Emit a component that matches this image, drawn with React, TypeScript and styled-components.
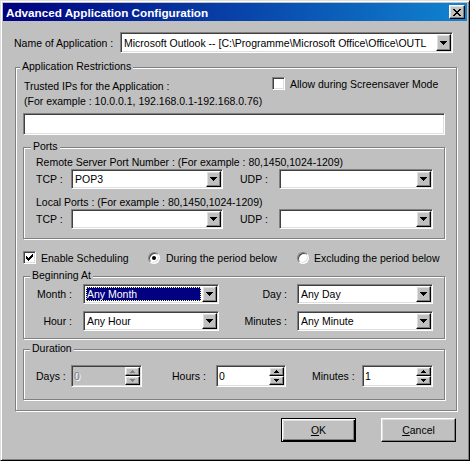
import React from "react";
import styled, { createGlobalStyle, css } from "styled-components";

const GlobalStyle = createGlobalStyle`
  html, body { margin: 0; padding: 0; background: #c0c0c0; }
  body {
    font-family: "Liberation Sans", Arial, sans-serif;
    font-size: 10.5px;
    color: #000;
  }
  * { box-sizing: border-box; }
`;

const raised = css`
  border: 1px solid;
  border-color: #fff #000 #000 #fff;
  box-shadow: inset -1px -1px 0 #808080, inset 1px 1px 0 #dfdfdf;
  background: #c0c0c0;
`;

const sunken = css`
  border: 1px solid;
  border-color: #808080 #fff #fff #808080;
  box-shadow: inset 1px 1px 0 #404040, inset -1px -1px 0 #dfdfdf;
  padding: 1px;
`;

const etched = css`
  border: 1px solid #808080;
  box-shadow: inset 1px 1px 0 #fff, 1px 1px 0 #fff;
`;

const Window = styled.div`
  width: 470px;
  height: 461px;
  background: #c0c0c0;
  border: 1px solid;
  border-color: #dfdfdf #000 #000 #dfdfdf;
  box-shadow: inset 1px 1px 0 #fff, inset -1px -1px 0 #808080;
  padding: 2px;
  display: flex;
  flex-direction: column;
`;

const TitleBar = styled.div`
  height: 18px;
  flex: none;
  display: flex;
  align-items: center;
  justify-content: space-between;
  background: linear-gradient(to right, #000080, #1084d0);
  padding: 0 2px 0 3px;
`;

const TitleText = styled.span`
  color: #fff;
  font-weight: bold;
  font-size: 11.7px;
  white-space: nowrap;
`;

const CloseButton = styled.div`
  ${raised};
  width: 16px;
  height: 14px;
  display: flex;
  align-items: center;
  justify-content: center;
`;

const Body = styled.div`
  padding: 0 10px 0 11px;
  display: flex;
  flex-direction: column;
`;

const NameRow = styled.div`
  display: flex;
  align-items: center;
  margin-top: 11px;
`;

const NameLabel = styled.span`
  width: 106px;
  flex: none;
  white-space: nowrap;
`;

const GroupBox = styled.div<{ $mt: number; $pad: string; $w?: number }>`
  position: relative;
  ${etched};
  margin-top: ${(p) => p.$mt}px;
  padding: ${(p) => p.$pad};
  ${(p) => (p.$w ? `width: ${p.$w}px; margin-left: 1px;` : "")}
`;

const GroupLegend = styled.span<{ $left: number }>`
  position: absolute;
  top: -8px;
  left: ${(p) => p.$left}px;
  padding: 0 2px;
  line-height: 13px;
  background: #c0c0c0;
  white-space: nowrap;
`;

const TopRow = styled.div`
  display: flex;
  align-items: flex-start;
  height: 33px;
`;

const TrustedText = styled.div`
  width: 249px;
  margin-top: 3px;
  padding-left: 1px;
  line-height: 15px;
  white-space: nowrap;
`;

const CheckItem = styled.div<{ $mt?: number; $w?: number }>`
  display: flex;
  align-items: center;
  margin-top: ${(p) => p.$mt ?? 0}px;
  ${(p) => (p.$w ? `width: ${p.$w}px;` : "")}
  white-space: nowrap;
  flex: none;
`;

const CheckBoxSquare = styled.div`
  ${sunken};
  width: 13px;
  height: 13px;
  padding: 0;
  background: #fff;
  display: flex;
  align-items: center;
  justify-content: center;
  flex: none;
`;

const RadioCircle = styled.div`
  width: 12px;
  height: 12px;
  border-radius: 50%;
  border: 1px solid;
  border-color: #808080 #fff #fff #808080;
  box-shadow: inset 1px 1px 0 #404040, inset -1px -1px 0 #dfdfdf;
  background: #fff;
  display: flex;
  align-items: center;
  justify-content: center;
  flex: none;
`;

const RadioDot = styled.div`
  width: 4px;
  height: 4px;
  border-radius: 50%;
  background: #000;
`;

const OptionText = styled.span<{ $gap: number }>`
  margin-left: ${(p) => p.$gap}px;
`;

const TextInput = styled.div`
  ${sunken};
  background: #fff;
  width: 422px;
  height: 22px;
  margin-top: 4px;
`;

const InfoLine = styled.div<{ $mt?: number }>`
  line-height: 13px;
  margin-top: ${(p) => p.$mt ?? 0}px;
  white-space: nowrap;
`;

const FieldRow = styled.div<{ $mt?: number }>`
  display: flex;
  align-items: center;
  margin-top: ${(p) => p.$mt ?? 0}px;
`;

const FieldLabel = styled.span<{ $w: number; $ml?: number; $right?: boolean }>`
  width: ${(p) => p.$w}px;
  margin-left: ${(p) => p.$ml ?? 0}px;
  flex: none;
  display: flex;
  justify-content: ${(p) => (p.$right ? "flex-end" : "flex-start")};
  white-space: nowrap;
`;

const ComboFrame = styled.div<{ $w: number; $h: number; $ml?: number }>`
  ${sunken};
  background: #fff;
  width: ${(p) => p.$w}px;
  height: ${(p) => p.$h}px;
  margin-left: ${(p) => p.$ml ?? 0}px;
  display: flex;
  align-items: stretch;
  flex: none;
`;

const ComboValue = styled.div<{ $selected?: boolean }>`
  flex: 1;
  min-width: 0;
  display: flex;
  align-items: center;
  padding-left: 2px;
  white-space: nowrap;
  overflow: hidden;
  ${(p) =>
    p.$selected &&
    css`
      background: #000080;
      color: #fff;
      margin: 1px;
      padding-left: 1px;
      outline: 1px dotted #ffff80;
      outline-offset: -1px;
    `}
`;

const DropButton = styled.div`
  ${raised};
  width: 15px;
  flex: none;
  display: flex;
  align-items: center;
  justify-content: center;
`;

const SchedRow = styled.div`
  display: flex;
  align-items: center;
  height: 13px;
  margin-top: 12px;
`;

const SpinFrame = styled.div<{ $w: number; $disabled?: boolean }>`
  ${sunken};
  width: ${(p) => p.$w}px;
  height: 22px;
  background: ${(p) => (p.$disabled ? "#c0c0c0" : "#fff")};
  display: flex;
  flex: none;
`;

const SpinValue = styled.div<{ $disabled?: boolean }>`
  flex: 1;
  display: flex;
  align-items: center;
  padding-left: 1px;
  color: ${(p) => (p.$disabled ? "#808080" : "#000")};
  ${(p) => (p.$disabled ? "text-shadow: 1px 1px 0 #fff;" : "")}
`;

const SpinButtons = styled.div`
  width: 15px;
  flex: none;
  display: flex;
  flex-direction: column;
`;

const SpinButton = styled.div`
  ${raised};
  flex: 1;
  display: flex;
  align-items: center;
  justify-content: center;
`;

const ButtonRow = styled.div`
  display: flex;
  justify-content: flex-end;
  gap: 25px;
  margin-top: 7px;
  margin-right: 1px;
`;

const PushButton = styled.div<{ $default?: boolean }>`
  width: 75px;
  height: 24px;
  display: flex;
  align-items: center;
  justify-content: center;
  background: #c0c0c0;
  border: 1px solid;
  ${(p) =>
    p.$default
      ? css`
          border-color: #000;
          box-shadow: inset 1px 1px 0 #fff, inset -1px -1px 0 #000,
            inset -2px -2px 0 #808080, inset 2px 2px 0 #dfdfdf;
        `
      : css`
          border-color: #fff #000 #000 #fff;
          box-shadow: inset -1px -1px 0 #808080, inset 1px 1px 0 #dfdfdf;
        `}
`;

const ArrowDown = ({ color = "#000" }: { color?: string }) => (
  <svg width="7" height="4" viewBox="0 0 7 4" shapeRendering="crispEdges">
    <path d="M0 0h7v1H0z M1 1h5v1H1z M2 2h3v1H2z M3 3h1v1H3z" fill={color} />
  </svg>
);

const SmallArrow = ({ up, color = "#000" }: { up?: boolean; color?: string }) => (
  <svg width="5" height="3" viewBox="0 0 5 3" shapeRendering="crispEdges">
    {up ? (
      <path d="M2 0h1v1H2z M1 1h3v1H1z M0 2h5v1H0z" fill={color} />
    ) : (
      <path d="M0 0h5v1H0z M1 1h3v1H1z M2 2h1v1H2z" fill={color} />
    )}
  </svg>
);

const CheckMark = () => (
  <svg width="7" height="7" viewBox="0 0 7 7" shapeRendering="crispEdges">
    <path
      d="M6 0h1v1H6z M5 1h2v1H5z M0 2h1v1H0z M4 2h3v1H4z M0 3h2v1H0z M3 3h3v1H3z M0 4h5v1H0z M1 5h3v1H1z M2 6h1v1H2z"
      fill="#000"
    />
  </svg>
);

const CloseGlyph = () => (
  <svg width="8" height="7" viewBox="0 0 8 7" shapeRendering="crispEdges">
    <path
      d="M0 0h2v1H0z M6 0h2v1H6z M1 1h2v1H1z M5 1h2v1H5z M2 2h4v1H2z M3 3h2v1H3z M2 4h4v1H2z M1 5h2v1H1z M5 5h2v1H5z M0 6h2v1H0z M6 6h2v1H6z"
      fill="#000"
    />
  </svg>
);

const Combo = ({
  w,
  h = 20,
  ml,
  value,
  selected,
}: {
  w: number;
  h?: number;
  ml?: number;
  value?: string;
  selected?: boolean;
}) => (
  <ComboFrame $w={w} $h={h} $ml={ml}>
    <ComboValue $selected={selected}>{value}</ComboValue>
    <DropButton>
      <ArrowDown />
    </DropButton>
  </ComboFrame>
);

const Spin = ({ w, value, disabled }: { w: number; value: string; disabled?: boolean }) => {
  const c = disabled ? "#808080" : "#000";
  return (
    <SpinFrame $w={w} $disabled={disabled}>
      <SpinValue $disabled={disabled}>{value}</SpinValue>
      <SpinButtons>
        <SpinButton>
          <SmallArrow up color={c} />
        </SpinButton>
        <SpinButton>
          <SmallArrow color={c} />
        </SpinButton>
      </SpinButtons>
    </SpinFrame>
  );
};

export default function App() {
  return (
    <>
      <GlobalStyle />
      <Window>
        <TitleBar>
          <TitleText>Advanced Application Configuration</TitleText>
          <CloseButton>
            <CloseGlyph />
          </CloseButton>
        </TitleBar>
        <Body>
          <NameRow>
            <NameLabel>Name of Application :</NameLabel>
            <Combo
              w={333}
              h={21}
              value="Microsoft Outlook -- [C:\Programme\Microsoft Office\Office\OUTL"
            />
          </NameRow>

          <GroupBox $mt={14} $w={442} $pad="8px 11px 10px 7px">
            <GroupLegend $left={4}>Application Restrictions</GroupLegend>
            <TopRow>
              <TrustedText>
                Trusted IPs for the Application :<br />
                (For example : 10.0.0.1, 192.168.0.1-192.168.0.76)
              </TrustedText>
              <CheckItem $mt={1}>
                <CheckBoxSquare />
                <OptionText $gap={5}>Allow during Screensaver Mode</OptionText>
              </CheckItem>
            </TopRow>
            <TextInput />

            <GroupBox $mt={12} $pad="8px 0 9px 12px">
              <GroupLegend $left={7}>Ports</GroupLegend>
              <InfoLine>Remote Server Port Number : (For example : 80,1450,1024-1209)</InfoLine>
              <FieldRow>
                <FieldLabel $w={35}>TCP :</FieldLabel>
                <Combo w={152} value="POP3" />
                <FieldLabel $w={39} $ml={17}>UDP :</FieldLabel>
                <Combo w={154} />
              </FieldRow>
              <InfoLine $mt={7}>Local Ports : (For example : 80,1450,1024-1209)</InfoLine>
              <FieldRow>
                <FieldLabel $w={35}>TCP :</FieldLabel>
                <Combo w={152} />
                <FieldLabel $w={39} $ml={17}>UDP :</FieldLabel>
                <Combo w={154} />
              </FieldRow>
            </GroupBox>

            <SchedRow>
              <CheckItem $w={125}>
                <CheckBoxSquare>
                  <CheckMark />
                </CheckBoxSquare>
                <OptionText $gap={5}>Enable Scheduling</OptionText>
              </CheckItem>
              <CheckItem $w={149}>
                <RadioCircle>
                  <RadioDot />
                </RadioCircle>
                <OptionText $gap={6}>During the period below</OptionText>
              </CheckItem>
              <CheckItem>
                <RadioCircle />
                <OptionText $gap={5}>Excluding the period below</OptionText>
              </CheckItem>
            </SchedRow>

            <GroupBox $mt={12} $pad="7px 0 7px 12px">
              <GroupLegend $left={6}>Beginning At</GroupLegend>
              <FieldRow>
                <FieldLabel $w={36} $right>Month :</FieldLabel>
                <Combo w={136} ml={11} value="Any Month" selected />
                <FieldLabel $w={68} $right>Day :</FieldLabel>
                <Combo w={136} ml={10} value="Any Day" />
              </FieldRow>
              <FieldRow $mt={7}>
                <FieldLabel $w={36} $right>Hour :</FieldLabel>
                <Combo w={136} ml={11} value="Any Hour" />
                <FieldLabel $w={68} $right>Minutes :</FieldLabel>
                <Combo w={136} ml={10} value="Any Minute" />
              </FieldRow>
            </GroupBox>

            <GroupBox $mt={10} $pad="15px 0 12px 12px">
              <GroupLegend $left={6}>Duration</GroupLegend>
              <FieldRow>
                <FieldLabel $w={35}>Days :</FieldLabel>
                <Spin w={71} value="0" disabled />
                <FieldLabel $w={44} $ml={30}>Hours :</FieldLabel>
                <Spin w={70} value="0" />
                <FieldLabel $w={50} $ml={26}>Minutes :</FieldLabel>
                <Spin w={71} value="1" />
              </FieldRow>
            </GroupBox>
          </GroupBox>

          <ButtonRow>
            <PushButton $default>
              <span>
                <u>O</u>K
              </span>
            </PushButton>
            <PushButton>
              <span>
                <u>C</u>ancel
              </span>
            </PushButton>
          </ButtonRow>
        </Body>
      </Window>
    </>
  );
}
